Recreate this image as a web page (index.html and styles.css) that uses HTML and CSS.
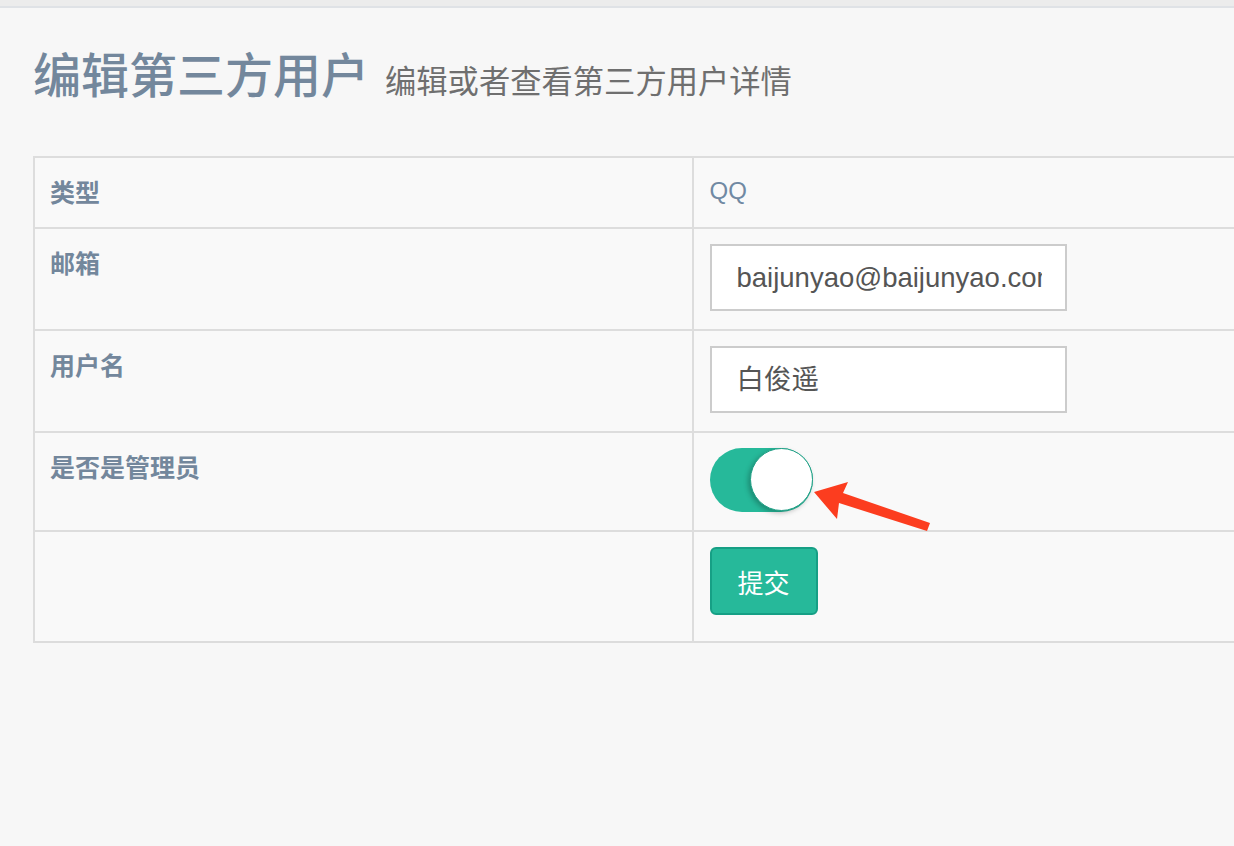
FILE: index.html
```html
<!DOCTYPE html>
<html lang="zh-CN">
<head>
<meta charset="utf-8">
<title>编辑第三方用户</title>
<link rel="stylesheet" href="styles.css">
</head>
<body>
<div class="topbar"></div>
<main class="page">
  <div class="page-title">
    <h1>编辑第三方用户</h1>
    <span class="subtitle">编辑或者查看第三方用户详情</span>
  </div>
  <table class="detail">
    <tr>
      <th>类型</th>
      <td class="plain">QQ</td>
    </tr>
    <tr>
      <th>邮箱</th>
      <td><div class="field"><div class="field-text">baijunyao@baijunyao.com</div></div></td>
    </tr>
    <tr>
      <th>用户名</th>
      <td><div class="field"><div class="field-text">白俊遥</div></div></td>
    </tr>
    <tr>
      <th>是否是管理员</th>
      <td><span class="switch"><span class="knob"></span></span></td>
    </tr>
    <tr>
      <th></th>
      <td><button class="submit" type="button">提交</button></td>
    </tr>
  </table>
</main>
<svg class="annot" width="1234" height="846" viewBox="0 0 1234 846">
  <polygon fill="#fc3d1f" points="814,492 848,482 843,493 930,523 927,531 839,503 837,519"/>
</svg>
</body>
</html>
```
FILE: styles.css
```css
html, body {
  margin: 0;
  padding: 0;
}
body {
  background: #f7f7f7;
  font-family: "Noto Sans CJK SC", "Noto Sans", sans-serif;
  color: #73879c;
  width: 1234px;
  height: 846px;
  overflow: hidden;
  position: relative;
}
.topbar {
  height: 6px;
  background: #ececec;
  border-bottom: 2px solid #dfe2e6;
}
.page {
  padding: 0 0 0 33px;
}
.page-title {
  display: flex;
  align-items: baseline;
  gap: 16px;
  margin-top: 36px;
  height: 112px;
}
.page-title h1 {
  margin: 0;
  font-size: 48px;
  line-height: 56px;
  font-weight: 500;
  color: #73879c;
  letter-spacing: 0;
}
.subtitle {
  font-size: 31.3px;
  color: #6f6f6f;
  font-weight: 400;
}
.detail {
  border-collapse: collapse;
  width: 1320px;
  table-layout: fixed;
  background: #f9f9f9;
  border-left: 2px solid #dddddd;
  border-bottom: 2px solid #dcdcdc;
}
.detail th, .detail td {
  border-top: 2px solid #dddddd;
  border-right: 2px solid #dddddd;
  text-align: left;
  vertical-align: top;
  padding: 15px 16px 18px 15px;
  width: 50%;
}
.detail th {
  font-size: 25px;
  line-height: 36px;
  font-weight: 700;
  color: #73879c;
}
.detail td {
  padding-left: 16px;
}
.detail td.plain {
  font-family: "Liberation Sans", "Noto Sans", sans-serif;
  font-size: 24px;
  line-height: 36px;
  color: #7089a3;
}
.field {
  box-sizing: border-box;
  width: 357px;
  height: 67px;
  background: #ffffff;
  border: 2px solid #cccccc;
  padding: 0 23px 0 25px;
}
.field-text {
  font-family: "Liberation Sans", "Noto Sans CJK SC", sans-serif;
  font-size: 27.5px;
  line-height: 63px;
  color: #555555;
  white-space: nowrap;
  overflow: hidden;
}
.switch {
  display: block;
  position: relative;
  width: 103px;
  height: 64px;
  border-radius: 32px;
  background: #26b99a;
}
.knob {
  position: absolute;
  right: 0;
  top: 0;
  box-sizing: border-box;
  width: 63px;
  height: 63px;
  border-radius: 50%;
  background: #ffffff;
  border: 1.5px solid #1f9f85;
  box-shadow: -2px 2px 5px rgba(0, 0, 0, 0.25);
}
.submit {
  display: block;
  box-sizing: border-box;
  width: 108px;
  height: 68px;
  margin-bottom: 8px;
  background: #26b99a;
  border: 2px solid #169f85;
  border-radius: 6px;
  color: #ffffff;
  font-family: "Noto Sans CJK SC", sans-serif;
  font-size: 26px;
  padding: 0;
}
.annot {
  position: absolute;
  left: 0;
  top: 0;
  pointer-events: none;
}
```
